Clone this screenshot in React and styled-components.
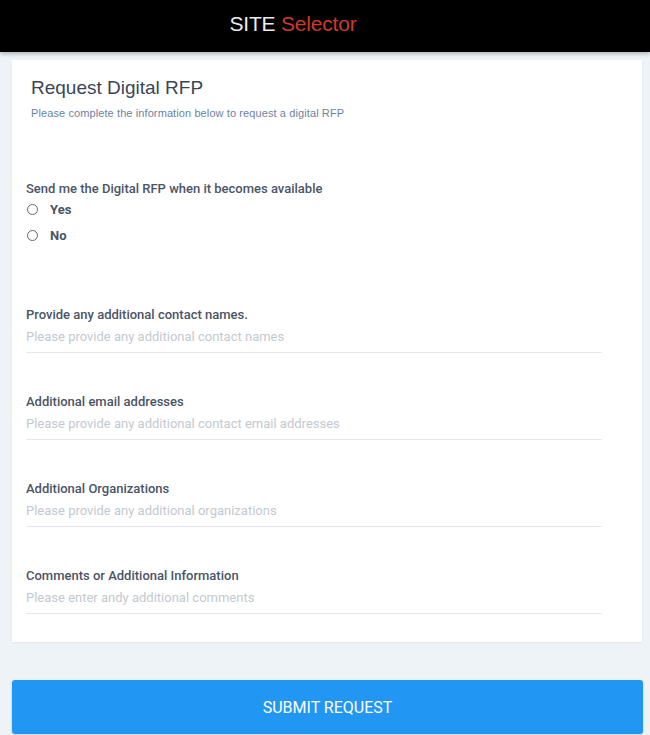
import React from "react";
import styled, { createGlobalStyle } from "styled-components";

const Global = createGlobalStyle`
  html, body { margin: 0; padding: 0; background: #edf3f7; }
  body { font-family: Roboto, "Liberation Sans", Arial, sans-serif; }
  * { box-sizing: border-box; }
`;

const Header = styled.header`
  height: 52px;
  background: #000;
  display: flex;
  align-items: center;
  justify-content: center;
  padding: 0 64px 4px 0;
  box-shadow: 0 2px 4px rgba(0, 0, 0, 0.25);
  position: relative;
  z-index: 1;
`;

const Brand = styled.div`
  font-family: "Liberation Sans", Arial, sans-serif;
  font-size: 21px;
  color: #ececec;
  letter-spacing: -0.2px;
  span { color: #d0392b; }
`;

const Main = styled.main`
  padding: 8px 8px 2px 12px;
`;

const Card = styled.section`
  background: #fff;
  padding: 17px 40px 28px 14px;
  box-shadow: 0 1px 2px rgba(0, 0, 0, 0.06);
`;

const Title = styled.h1`
  margin: 0 0 0 5px;
  font-family: "Liberation Sans", Arial, sans-serif;
  font-weight: 400;
  font-size: 19px;
  line-height: 22px;
  color: #3a4656;
`;

const Subtitle = styled.p`
  margin: 7px 0 0 5px;
  font-family: "Liberation Sans", Arial, sans-serif;
  font-size: 11px;
  letter-spacing: 0.1px;
  line-height: 14px;
  color: #6b84a3;
`;

const Group = styled.div`
  margin-top: ${(p) => p.$mt}px;
`;

const Label = styled.div`
  font-size: 13px;
  font-weight: 500;
  line-height: ${(p) => p.$lh || 16}px;
  color: #4b5467;
`;

const RadioRow = styled.label`
  display: flex;
  align-items: center;
  height: 26px;
  gap: 12px;
  font-size: 13px;
  font-weight: 700;
  color: #4b5467;
  padding-left: 1px;
`;

const Circle = styled.span`
  width: 11px;
  height: 11px;
  border-radius: 50%;
  border: 1.5px solid #666;
`;

const Field = styled.div`
  margin-top: ${(p) => p.$mt}px;
`;

const Input = styled.div`
  margin-top: 5px;
  font-size: 13px;
  line-height: 18px;
  color: #c3c9cf;
  padding-bottom: 6px;
  border-bottom: 1.5px solid #e4e9ef;
`;

const Submit = styled.button`
  margin-top: 38px;
  width: calc(100% + 1px);
  height: 54px;
  border: none;
  border-radius: 3px;
  background: #2196f3;
  color: #fff;
  font-family: Roboto, "Liberation Sans", Arial, sans-serif;
  font-size: 16px;
  font-weight: 400;
  box-shadow: 0 1px 3px rgba(0, 0, 0, 0.15);
`;

const fields = [
  ["Provide any additional contact names.", "Please provide any additional contact names"],
  ["Additional email addresses", "Please provide any additional contact email addresses"],
  ["Additional Organizations", "Please provide any additional organizations"],
  ["Comments or Additional Information", "Please enter andy additional comments"],
];

export default function App() {
  return (
    <>
      <Global />
      <Header>
        <Brand>
          SITE <span>Selector</span>
        </Brand>
      </Header>
      <Main>
        <Card>
          <Title>Request Digital RFP</Title>
          <Subtitle>Please complete the information below to request a digital RFP</Subtitle>
          <Group $mt={62}>
            <Label $lh={14}>Send me the Digital RFP when it becomes available</Label>
            <RadioRow>
              <Circle />
              Yes
            </RadioRow>
            <RadioRow>
              <Circle />
              No
            </RadioRow>
          </Group>
          {fields.map(([l, p], i) => (
            <Field key={l} $mt={i === 0 ? 59 : 41}>
              <Label>{l}</Label>
              <Input>{p}</Input>
            </Field>
          ))}
        </Card>
        <Submit>SUBMIT REQUEST</Submit>
      </Main>
    </>
  );
}
